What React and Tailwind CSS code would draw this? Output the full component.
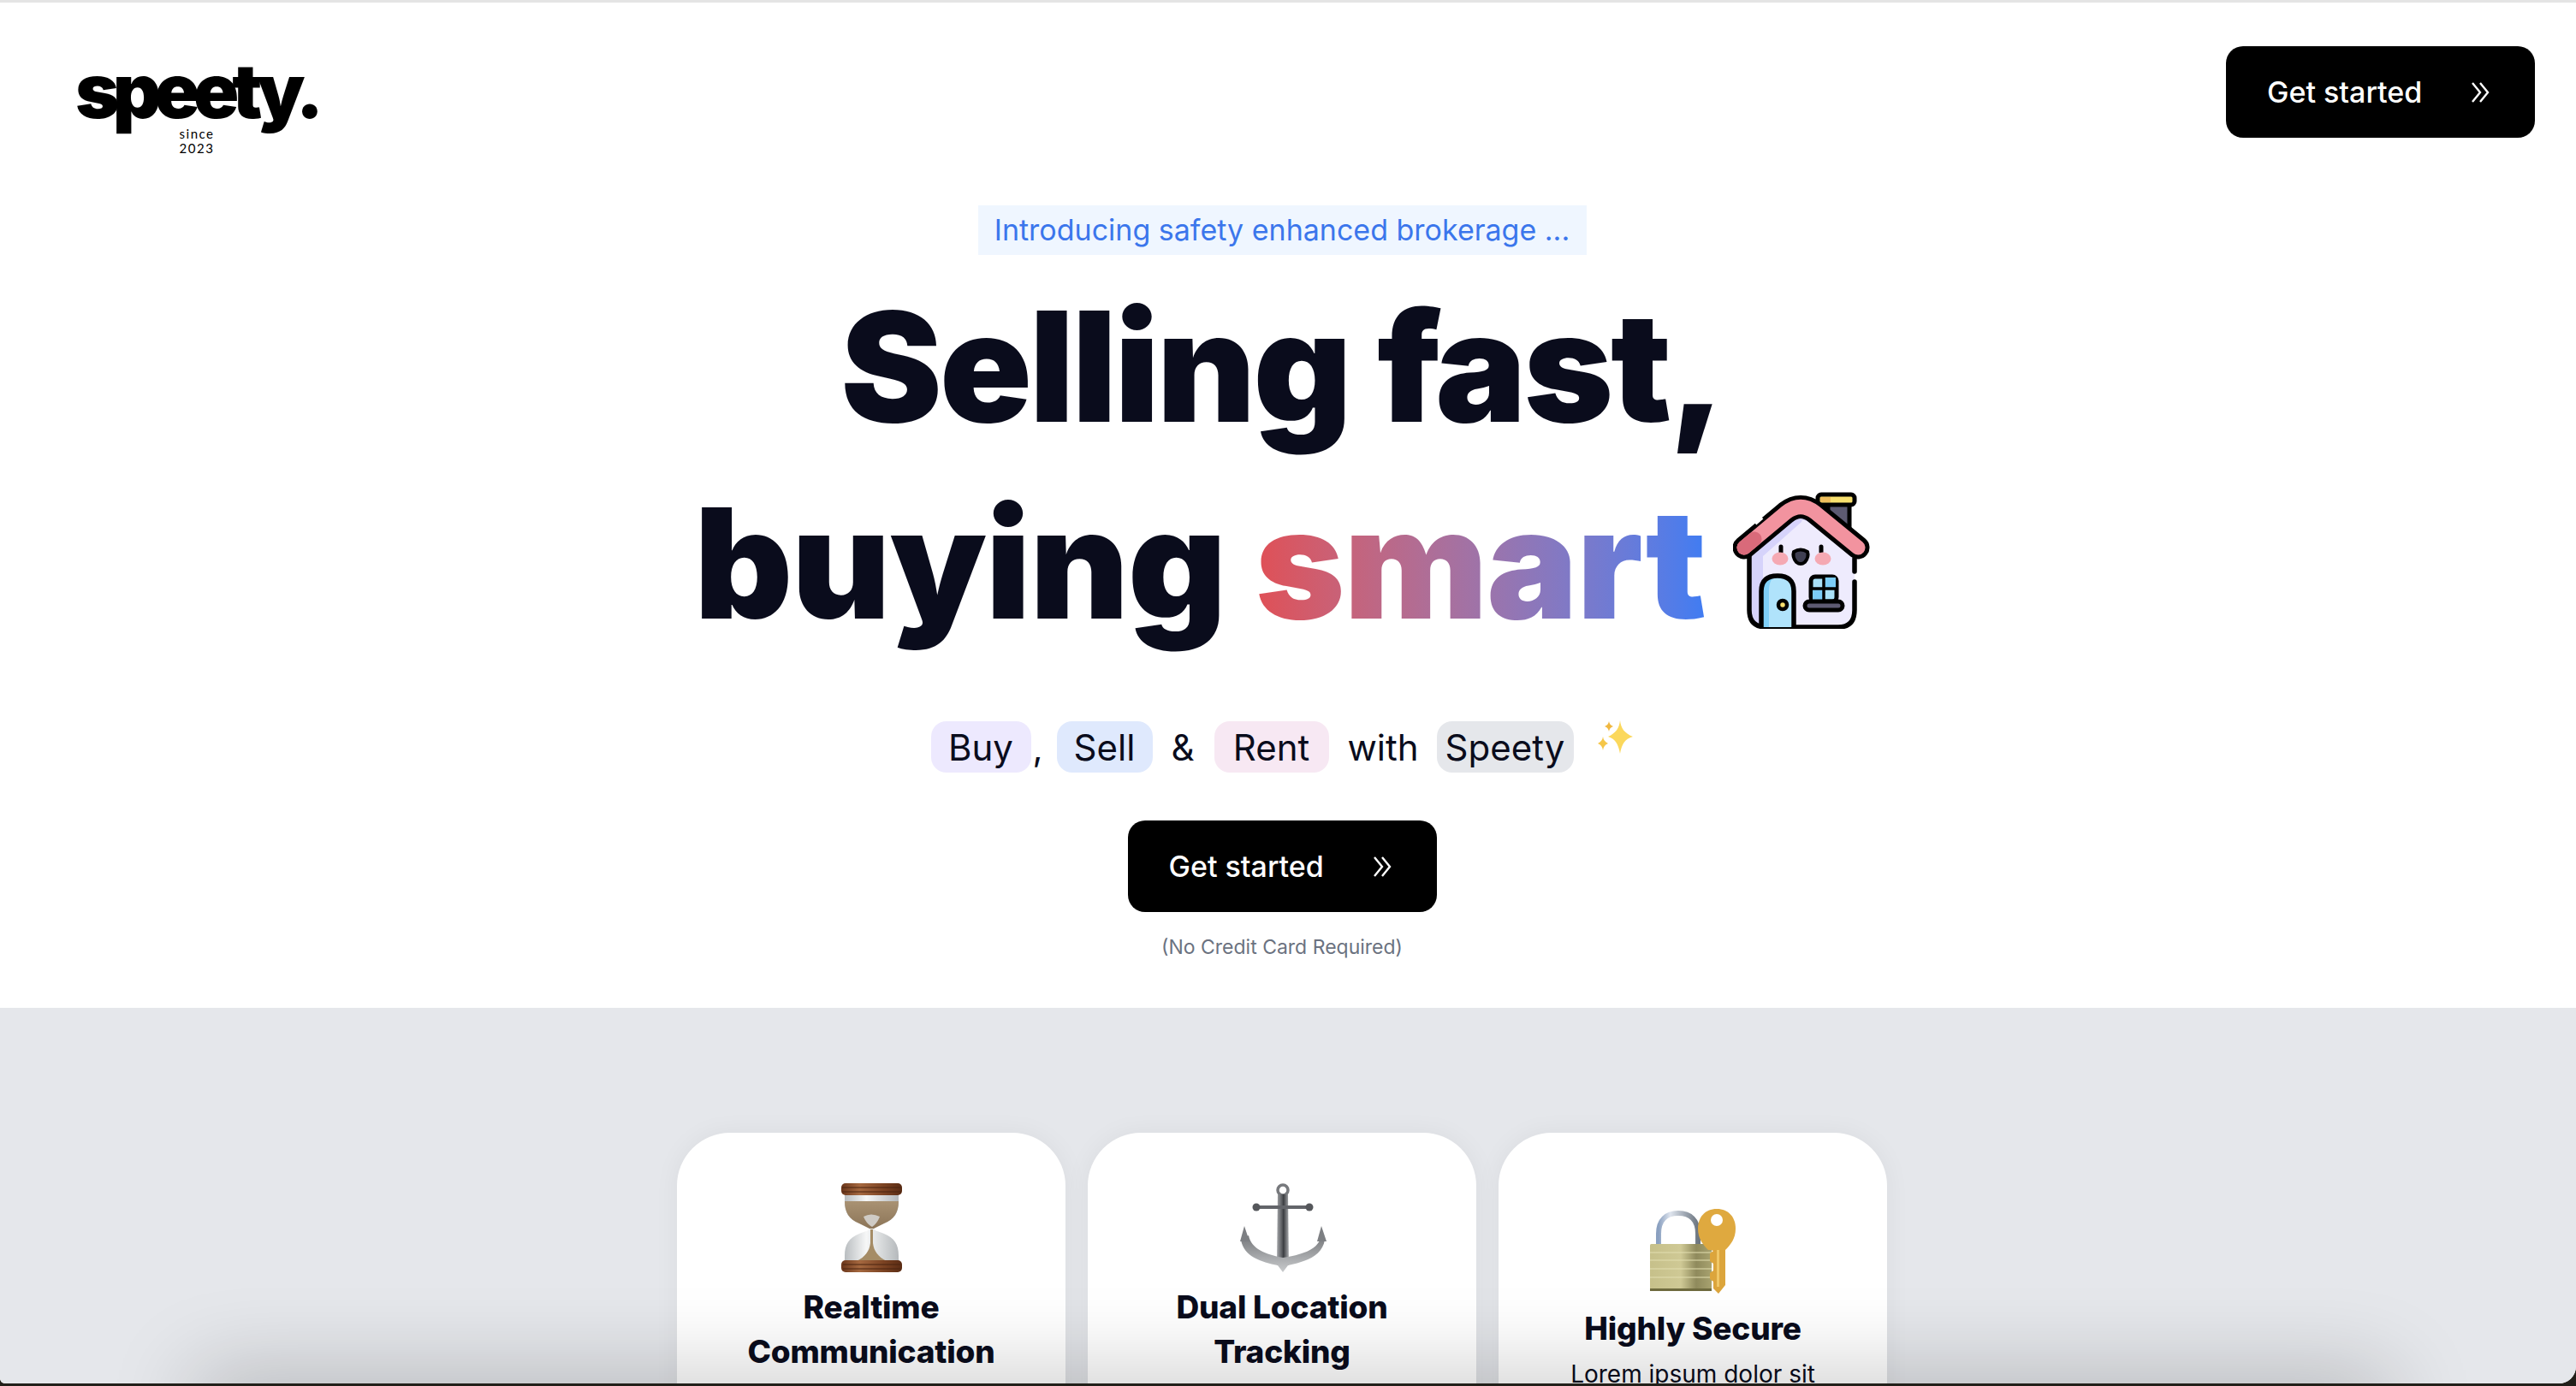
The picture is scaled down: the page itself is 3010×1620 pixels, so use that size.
import React from "react";

const font = { fontFamily: "Inter, 'Liberation Sans', sans-serif" };

function Chevrons() {
  return (
    <svg width="21" height="24" viewBox="0 0 21 24" fill="none" stroke="currentColor" strokeWidth="2.4">
      <path d="M1 1l9 11-9 11" />
      <path d="M10 1l9 11-9 11" />
    </svg>
  );
}

function CtaButton() {
  return (
    <button className="flex h-[107px] w-[361px] items-center justify-between rounded-[20px] bg-black pl-[48px] pr-[53px] text-[34px] font-medium text-white">
      <span>Get started</span>
      <Chevrons />
    </button>
  );
}

function HouseIcon() {
  return (
    <svg width="160" height="160" viewBox="0 0 160 160" fill="none" className="-mt-[8px] ml-[32px] shrink-0">
      {/* chimney */}
      <path d="M111 12h25v40h-25z" fill="#5d5a72" stroke="#000" strokeWidth="5" />
      <rect x="99" y="3" width="43" height="12" rx="4" fill="#f8e06e" stroke="#000" strokeWidth="5" />
      <rect x="102" y="6" width="12" height="6" fill="#efbe5c" />
      {/* body */}
      <path d="M19 60v78q0 20 20 20h84q19 0 19-20V60L80 20z" fill="#eeebfd" />
      <path d="M19 60v78q0 20 20 20h15q-19 0-19-20V75l45-40 5-15z" fill="#d6d3fb" />
      <path d="M38 61l34-26q8-5 16 0l37 30 17 12-2-14-50-42H60z" fill="#d6d3fb" />
      <path d="M19 72v66q0 20 20 20h84q19 0 19-20v-33M142 93V78" stroke="#000" strokeWidth="5.5" strokeLinecap="round" />
      {/* roof */}
      <path d="M13 65l49-41q17-13 34 0l50 41" stroke="#000" strokeWidth="27" strokeLinecap="round" strokeLinejoin="round" />
      <path d="M13 65l49-41q17-13 34 0l50 41" stroke="#f2939f" strokeWidth="17" strokeLinecap="round" strokeLinejoin="round" />
      <path d="M13 65l12-10" stroke="#d96a7a" strokeWidth="17" strokeLinecap="round" />
      <path d="M26 37l8-7" stroke="#fff" strokeWidth="4" />
      {/* face */}
      <path d="M56 64v6M103 64v6" stroke="#000" strokeWidth="5" strokeLinecap="round" />
      <ellipse cx="55" cy="78" rx="9.5" ry="7.5" fill="#f5a9b3" />
      <ellipse cx="105" cy="78" rx="9.5" ry="7.5" fill="#f5a9b3" />
      <path d="M71 70q8-5 16 0q2 6-3 12q-5 4-10 0q-5-6-3-12z" fill="#3f3f52" stroke="#000" strokeWidth="4" />
      {/* door */}
      <path d="M33 158v-42q0-18 19-18t19 18v42z" fill="#b0e3fb" />
      <path d="M33 158v-42q0-18 19-18q-10 2-10 18v42z" fill="#7fd0f8" />
      <path d="M33 158v-42q0-18 19-18t19 18v42" stroke="#000" strokeWidth="5.5" />
      <circle cx="58" cy="132" r="5" fill="#f8e06e" stroke="#000" strokeWidth="4.5" />
      {/* window */}
      <rect x="91" y="99" width="30" height="29" rx="5" fill="#a9e0f8" stroke="#000" strokeWidth="5" />
      <path d="M107 100h13v12h-13zM93 114h13v13H93z" fill="#7ccdf8" />
      <path d="M106 99v29M91 113h30" stroke="#000" strokeWidth="3.5" />
      <rect x="84" y="128" width="44" height="10" rx="5" fill="#5d5a72" stroke="#000" strokeWidth="5" />
    </svg>
  );
}

function Sparkles() {
  return (
    <svg width="44" height="40" viewBox="0 0 44 40" className="ml-[26px] -mt-[22px] shrink-0">
      <path d="M28 0c1 9 5 15 15 19-10 3-13 9-15 20-2-11-5-17-14-20 9-4 13-10 14-19z" fill="#fbd85c" />
      <path d="M15 1c.5 3 2 5 5 6-3 1-4.500 3-5 6-.5-3-2-5-5-6 3-1 4.500-3 5-6z" fill="#f0b840" />
      <path d="M8 19c.5 4 2.500 6 6 8-3.500 1.500-5.500 4-6 8-.5-4-2.500-6.500-6-8 3.500-2 5.500-4 6-8z" fill="#f5c648" />
    </svg>
  );
}

function Hourglass() {
  return (
    <svg width="71" height="104" viewBox="0 0 71 104">
      <defs>
        <linearGradient id="wood" x1="0" x2="1" y1="0" y2="0">
          <stop offset="0" stopColor="#6a351a" />
          <stop offset=".3" stopColor="#a5683f" />
          <stop offset=".7" stopColor="#7b4222" />
          <stop offset="1" stopColor="#5a2c14" />
        </linearGradient>
        <linearGradient id="sand" x1="0" x2="0" y1="0" y2="1">
          <stop offset="0" stopColor="#a99273" />
          <stop offset="1" stopColor="#8c7558" />
        </linearGradient>
        <linearGradient id="glass" x1="0" x2="1" y1="0" y2="0">
          <stop offset="0" stopColor="#b9bdc0" />
          <stop offset=".4" stopColor="#f6f7f7" />
          <stop offset="1" stopColor="#b5b9bc" />
        </linearGradient>
      </defs>
      <path d="M4 13h63v8c0 14-5 21-17 26-7 3-11 3-12 6 1 3 5 3 12 6 12 5 17 12 17 26v5H4v-5c0-14 5-21 17-26 7-3 11-3 12-6-1-3-5-3-12-6C9 42 4 35 4 21z" fill="url(#glass)" />
      <path d="M4 21h63c0 13-5 21-17 26l-12 6h-5l-12-6C9 42 4 34 4 21z" fill="url(#sand)" />
      <path d="M26 39q9-5 19 0q-3 8-9 12-7-4-10-12z" fill="#cfcbc5" />
      <path d="M34 54h3v16c1 9 6 16 16 21H18c10-5 15-12 16-21z" fill="#a58c66" />
      <rect x="0" y="0" width="71" height="14" rx="5" fill="url(#wood)" />
      <path d="M1 5h69M1 10h69" stroke="#4a2410" strokeWidth="1" />
      <rect x="0" y="90" width="71" height="14" rx="5" fill="url(#wood)" />
      <path d="M2 95h67M2 100h67" stroke="#4a2410" strokeWidth="1" />
    </svg>
  );
}

function Anchor() {
  return (
    <svg width="103" height="104" viewBox="0 0 103 104" fill="none">
      <defs>
        <linearGradient id="steel" x1="0" x2="1" y1="0" y2="0">
          <stop offset="0" stopColor="#a4a6a9" />
          <stop offset=".45" stopColor="#55575b" />
          <stop offset=".55" stopColor="#3a3c40" />
          <stop offset="1" stopColor="#a9abae" />
        </linearGradient>
        <linearGradient id="arm" x1="0" x2="0" y1="0" y2="1">
          <stop offset="0" stopColor="#75777a" />
          <stop offset="1" stopColor="#c9cbcd" />
        </linearGradient>
      </defs>
      <circle cx="52" cy="8" r="6" stroke="#77797d" strokeWidth="3.500" />
      <path d="M46 13h12l1 83H45z" fill="url(#steel)" />
      <path d="M21 28h62" stroke="#63656a" strokeWidth="4" strokeLinecap="round" />
      <circle cx="21" cy="28" r="4.500" fill="#55575b" />
      <circle cx="83" cy="28" r="4.500" fill="#55575b" />
      <path d="M3 66c3 20 24 26 43 30l6 8 6-8c19-4 40-10 43-30l-4-5c-3 16-20 22-45 26C32 83 15 77 12 61z" fill="url(#arm)" />
      <path d="M7 50L2 68h11zM97 50l-5 18h11z" fill="#7d7f83" />
    </svg>
  );
}

function LockKey() {
  return (
    <svg width="100" height="99" viewBox="0 0 100 99">
      <defs>
        <linearGradient id="brass" x1="0" x2="1" y1="0" y2="0">
          <stop offset="0" stopColor="#c6c08a" />
          <stop offset=".5" stopColor="#cfc995" />
          <stop offset=".75" stopColor="#8f8a5c" />
          <stop offset="1" stopColor="#a8a26f" />
        </linearGradient>
        <linearGradient id="shackle" x1="0" x2="1" y1="0" y2="0">
          <stop offset="0" stopColor="#8aa0c0" />
          <stop offset=".3" stopColor="#dfe5ee" />
          <stop offset=".7" stopColor="#9aa3ae" />
          <stop offset="1" stopColor="#6d7680" />
        </linearGradient>
      </defs>
      <path d="M10 44V29C10 13 19 5 33 5s23 8 23 24v15" fill="none" stroke="url(#shackle)" strokeWidth="6" />
      <rect x="0" y="41" width="72" height="55" rx="1.500" fill="url(#brass)" />
      <path d="M0 51h72M0 60h72M0 70h72M0 80h72" stroke="#e2deb0" strokeWidth="1" />
      <path d="M0 93h72v3H0z" fill="#6f6b3f" />
      <path d="M68 47h20v42l-8 10-6-6v-8l-4-3v-7l4-3v-8l-4-3v-9l4-3z" fill="#dca53c" />
      <path d="M78 47h3v44h-3z" fill="#f0c766" />
      <path d="M78 0c14 0 22 10 22 23 0 12-6 19-12 25H68c-6-6-12-13-12-25C56 10 64 0 78 0z" fill="#dfa93f" />
      <circle cx="78" cy="13" r="7" fill="#fff" />
    </svg>
  );
}

function FeatureCard({ icon, title, text, className }) {
  return (
    <div className={`flex h-[500px] w-[454px] flex-col items-center rounded-t-[62px] bg-white px-8 text-center shadow-[0_0_30px_rgba(0,0,0,0.05)] ${className}`}>
      {icon}
      <h3 className="mt-[15px] text-[37px] font-extrabold leading-[52px] tracking-[-0.2px] text-[#0a0c1c]">{title}</h3>
      {text && <p className="mt-[5px] text-[28px] leading-[44px] text-[#0a0c1c]">{text}</p>}
    </div>
  );
}

export default function App() {
  return (
    <div className="h-[1620px] w-[3010px] overflow-hidden bg-[#22201a]" style={font}>
      <div className="relative h-[1617px] overflow-hidden rounded-br-[20px] rounded-bl-[6px] border-t-[3px] border-[#e4e4e4] bg-white">
        <div className="w-[2996px]">
          {/* nav */}
          <header className="flex h-[237px] items-start justify-between pl-[88px] pr-[34px] pt-[51px]">
            <div className="relative mt-[16px] w-[290px]">
              <div className="h-[72px] text-[88px] font-black leading-[72px] tracking-[-8px] text-black">speety.</div>
              <div className="absolute left-[110px] top-[78px] w-[64px] text-center text-[15px] leading-[17px] tracking-[1.5px] text-black" style={{ fontFamily: "Lato, sans-serif" }}>
                since 2023
              </div>
            </div>
            <CtaButton />
          </header>

          {/* hero */}
          <section className="flex h-[938px] flex-col items-center">
            <div className="flex h-[58px] w-[711px] items-center justify-center bg-[#eff6ff] pb-[2px] text-[34px] text-[#3b76ec]">
              Introducing safety enhanced brokerage ...
            </div>
            <h1 className="mt-[16px] text-[178px] font-black leading-[230px] tracking-[-3px] text-[#0a0c1c]">
              Selling fast,
            </h1>
            <div className="flex items-center text-[178px] font-black leading-[230px] tracking-[-1px] text-[#0a0c1c]">
              <h1>
                buying{" "}
                <span className="bg-gradient-to-r from-[#e04f55] to-[#3f7cf2] bg-clip-text text-transparent">smart</span>
              </h1>
              <HouseIcon />
            </div>
            <div className="mt-[69px] flex h-[60px] items-center text-[42px] text-[#0a0c1c]">
              <span className="flex h-[60px] w-[117px] items-center justify-center rounded-[18px] bg-[#ede9fe]">Buy</span>
              <span className="ml-[2px] w-[28px]">,</span>
              <span className="flex h-[60px] w-[112px] items-center justify-center rounded-[18px] bg-[#dfe9fd]">Sell</span>
              <span className="ml-[22px] w-[50px]">&amp;</span>
              <span className="flex h-[60px] w-[134px] items-center justify-center rounded-[18px] bg-[#f7e8f3]">Rent</span>
              <span className="ml-[22px] w-[104px]">with</span>
              <span className="flex h-[60px] w-[160px] items-center justify-center rounded-[18px] bg-[#e5e7eb]">Speety</span>
              <Sparkles />
            </div>
            <div className="mt-[56px]">
              <CtaButton />
            </div>
            <p className="mt-[26px] text-[23px] leading-[30px] text-[#6b7280]">(No Credit Card Required)</p>
          </section>
        </div>

        {/* features */}
        <section className="h-[500px] bg-[#e5e7eb]">
          <div className="flex w-[2996px] justify-center gap-[26px] pt-[146px]">
            <FeatureCard className="pt-[59px]" icon={<Hourglass />} title={<>Realtime<br />Communication</>} />
            <FeatureCard className="pt-[59px]" icon={<Anchor />} title={<>Dual Location<br />Tracking</>} />
            <FeatureCard className="pt-[89px]" icon={<LockKey />} title="Highly Secure" text="Lorem ipsum dolor sit" />
          </div>
        </section>

        {/* soft shadow rising from the bottom edge */}
        <div className="pointer-events-none absolute -bottom-[60px] left-[240px] h-[60px] w-[2540px] shadow-[0_0_100px_12px_rgba(0,0,0,0.22)]" />
      </div>
    </div>
  );
}
